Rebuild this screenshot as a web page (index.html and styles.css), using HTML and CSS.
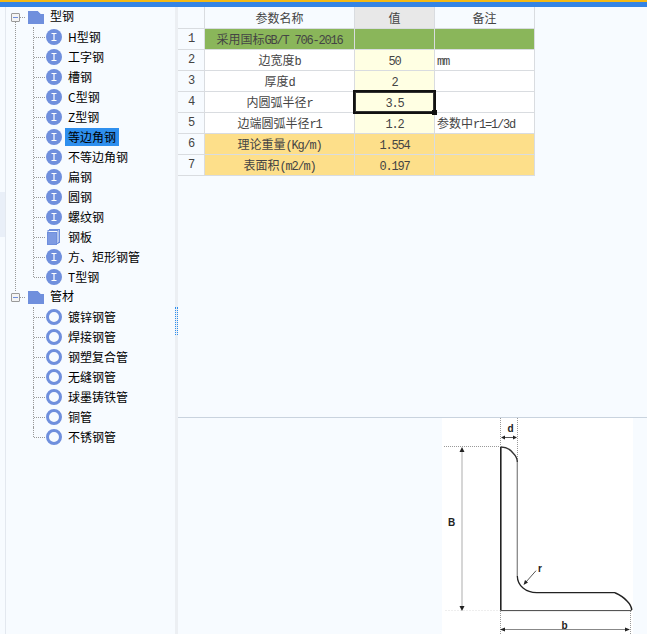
FILE: index.html
```html
<!DOCTYPE html>
<html lang="zh-CN">
<head>
  <meta charset="UTF-8" />
  <title>型钢参数</title>
  <link rel="stylesheet" href="styles.css">
</head>
<body>
  <svg width="0" height="0" class="defs">
    <defs>
      <g id="i-beam">
        <circle cx="8" cy="8" r="8" fill="#6f8fdd" />
        <path d="M5.5 4.5h5M5.5 11.5h5M8 4.5v7" stroke="#fff" stroke-width="1.2" fill="none" />
      </g>
      <g id="ring">
        <circle cx="8" cy="8" r="6.5" fill="none" stroke="#6f8fdd" stroke-width="3" />
      </g>
      <g id="plate">
        <rect x="3.5" y="0.5" width="10" height="13" fill="#f7fbff" stroke="#6f8fdd" />
        <rect x="2" y="1.5" width="10" height="13" fill="#f7fbff" stroke="#6f8fdd" />
        <rect x="1.5" y="3.5" width="9" height="12" fill="#7d9ae2" stroke="#6f8fdd" />
      </g>
      <g id="folder">
        <path d="M0 0h10l3 3h3v10H0z" fill="#6f8fdd" />
        <path d="M10 0h6v3h-3z" fill="#f7fbff" />
      </g>
    </defs>
  </svg>

  <div class="top-bar"></div>
  <div class="main">
    <div class="side-strip"><div class="side-mark"></div></div>

    <ul class="tree">
      <li class="root">
        <div class="node"><span class="expander"></span><svg class="folder" width="16" height="13"><use href="#folder" /></svg><span class="label">型钢</span></div>
        <ul class="children">
          <li class="leaf"><svg class="icon"><use href="#i-beam" /></svg><span class="label">H型钢</span></li>
          <li class="leaf"><svg class="icon"><use href="#i-beam" /></svg><span class="label">工字钢</span></li>
          <li class="leaf"><svg class="icon"><use href="#i-beam" /></svg><span class="label">槽钢</span></li>
          <li class="leaf"><svg class="icon"><use href="#i-beam" /></svg><span class="label">C型钢</span></li>
          <li class="leaf"><svg class="icon"><use href="#i-beam" /></svg><span class="label">Z型钢</span></li>
          <li class="leaf"><svg class="icon"><use href="#i-beam" /></svg><span class="label selected">等边角钢</span></li>
          <li class="leaf"><svg class="icon"><use href="#i-beam" /></svg><span class="label">不等边角钢</span></li>
          <li class="leaf"><svg class="icon"><use href="#i-beam" /></svg><span class="label">扁钢</span></li>
          <li class="leaf"><svg class="icon"><use href="#i-beam" /></svg><span class="label">圆钢</span></li>
          <li class="leaf"><svg class="icon"><use href="#i-beam" /></svg><span class="label">螺纹钢</span></li>
          <li class="leaf"><svg class="icon"><use href="#plate" /></svg><span class="label">钢板</span></li>
          <li class="leaf"><svg class="icon"><use href="#i-beam" /></svg><span class="label">方、矩形钢管</span></li>
          <li class="leaf"><svg class="icon"><use href="#i-beam" /></svg><span class="label">T型钢</span></li>
        </ul>
      </li>
      <li class="root">
        <div class="node"><span class="expander"></span><svg class="folder" width="16" height="13"><use href="#folder" /></svg><span class="label">管材</span></div>
        <ul class="children">
          <li class="leaf"><svg class="icon"><use href="#ring" /></svg><span class="label">镀锌钢管</span></li>
          <li class="leaf"><svg class="icon"><use href="#ring" /></svg><span class="label">焊接钢管</span></li>
          <li class="leaf"><svg class="icon"><use href="#ring" /></svg><span class="label">钢塑复合管</span></li>
          <li class="leaf"><svg class="icon"><use href="#ring" /></svg><span class="label">无缝钢管</span></li>
          <li class="leaf"><svg class="icon"><use href="#ring" /></svg><span class="label">球墨铸铁管</span></li>
          <li class="leaf"><svg class="icon"><use href="#ring" /></svg><span class="label">铜管</span></li>
          <li class="leaf"><svg class="icon"><use href="#ring" /></svg><span class="label">不锈钢管</span></li>
        </ul>
      </li>
    </ul>

    <div class="splitter"><div class="grip"></div></div>

    <div class="right">
      <div class="table-pane">
        <table class="params">
          <colgroup>
            <col class="col-no"><col class="col-name"><col class="col-val"><col class="col-note">
          </colgroup>
          <tr class="head">
            <th class="no"></th><th>参数名称</th><th class="val-head">值</th><th>备注</th>
          </tr>
          <tr class="green">
            <td class="no">1</td><td>采用国标<span class="en">GB/T 706-2016</span></td><td></td><td></td>
          </tr>
          <tr class="input">
            <td class="no">2</td><td>边宽度<span class="en">b</span></td><td class="val"><span class="en">50</span></td><td class="note"><span class="en">mm</span></td>
          </tr>
          <tr class="input">
            <td class="no">3</td><td>厚度<span class="en">d</span></td><td class="val"><span class="en">2</span></td><td class="note"></td>
          </tr>
          <tr class="input">
            <td class="no">4</td><td>内圆弧半径<span class="en">r</span></td><td class="val active"><span class="en">3.5</span></td><td class="note"></td>
          </tr>
          <tr class="input">
            <td class="no">5</td><td>边端圆弧半径<span class="en">r1</span></td><td class="val"><span class="en">1.2</span></td><td class="note">参数中<span class="en">r1=1/3d</span></td>
          </tr>
          <tr class="calc">
            <td class="no">6</td><td>理论重量<span class="en">(Kg/m)</span></td><td><span class="en">1.554</span></td><td></td>
          </tr>
          <tr class="calc">
            <td class="no">7</td><td>表面积<span class="en">(m2/m)</span></td><td><span class="en">0.197</span></td><td></td>
          </tr>
        </table>
      </div>

      <div class="draw-pane">
        <svg class="drawing" width="191" height="216" viewBox="0 0 191 216">
          <rect width="191" height="216" fill="#fff" />
          <g stroke="#999" stroke-width="1" stroke-dasharray="1 1" fill="none">
            <path d="M2 28.5H58" />
            <path d="M58.5 0V28" />
            <path d="M75.5 0V42" />
            <path d="M58.5 193V216" />
            <path d="M188.5 193V216" />
          </g>
          <path d="M3 192.5H58" stroke="#eee" stroke-dasharray="2 1" />
          <path d="M20 33V188" stroke="#bbb" stroke-width="1.2" />
          <path d="M20 29l-2.5 5h5zM20 193l-2.5-5h5z" fill="#222" />
          <path d="M61 19.5H73" stroke="#555" />
          <path d="M59 19.5l4-2v4zM75 19.5l-4-2v4z" fill="#222" />
          <path d="M60 211.5H186" stroke="#888" />
          <path d="M58 211.5l5-2v4zM188 211.5l-5-2v4z" fill="#222" />
          <path d="M58.8 28.8V192.6" stroke="#222" stroke-width="1.6" fill="none" />
          <path d="M58.8 29C65 29 68 31 71 35C74 38 75.3 40 75.3 44" stroke="#333" stroke-width="1.4" fill="none" />
          <path d="M75.3 44V158" stroke="#888" stroke-width="1.3" fill="none" />
          <path d="M75.3 158C75.5 168 84 174.7 94.7 174.7H173" stroke="#222" stroke-width="1.3" fill="none" />
          <path d="M173 174.7C178 177 182 179.5 185 183C188 186 189.5 189 189.7 192" stroke="#222" stroke-width="1.5" fill="none" />
          <path d="M58.8 192.6H189.7" stroke="#444" stroke-width="1" fill="none" />
          <path d="M94 152.7L84 164" stroke="#555" />
          <path d="M81.5 167l1.5-5 3 2.6z" fill="#222" />
          <text x="9.7" y="108" class="dim" text-anchor="middle">B</text>
          <text x="68.5" y="14" class="dim" text-anchor="middle">d</text>
          <text x="98" y="153.5" class="dim" text-anchor="middle">r</text>
          <text x="122.5" y="210.5" class="dim" text-anchor="middle">b</text>
        </svg>
      </div>
    </div>
  </div>
</body>
</html>
```

FILE: styles.css
```css
html, body {
  margin: 0;
  padding: 0;
  height: 100%;
  overflow: hidden;
}

body {
  background: #f7fbff;
  font-family: "Noto Sans CJK SC", "Liberation Sans", sans-serif;
  color: #000;
  display: flex;
  flex-direction: column;
}

.defs {
  position: absolute;
}

.top-bar {
  height: 5px;
  flex: none;
  background: #3584e4;
  border-top: 2px solid #f5b914;
}

.main {
  flex: 1;
  display: flex;
  min-height: 0;
}

/* left strip */
.side-strip {
  width: 5px;
  flex: none;
  background: #f7fbff;
  border-right: 1px solid #e3e8ef;
}

.side-mark {
  height: 45px;
  margin-top: 185px;
  background: #e9eff8;
}

/* tree */
.tree, .children {
  list-style: none;
  margin: 0;
  padding: 0;
}

.tree {
  width: 169px;
  flex: none;
  font-size: 12px;
}

.root {
  position: relative;
}

.root:first-child::before {
  content: "";
  position: absolute;
  left: 9px;
  top: 14px;
  height: 270px;
  border-left: 1px dotted #999;
}

.node {
  height: 20px;
  display: flex;
  align-items: center;
  position: relative;
}

.expander {
  width: 7px;
  height: 7px;
  margin-left: 5px;
  border: 1px solid #9a9a9a;
  border-radius: 1px;
  background: linear-gradient(#6f8fdd, #6f8fdd) center / 5px 1px no-repeat #f4f4f4;
  position: relative;
  z-index: 1;
}

.expander::after {
  content: "";
  position: absolute;
  left: 8px;
  top: 3px;
  width: 5px;
  border-top: 1px dotted #999;
}

.folder {
  margin-left: 8px;
  flex: none;
}

.node .label {
  margin-left: 6px;
  line-height: 16px;
  padding-bottom: 2px;
}

.leaf {
  height: 20px;
  display: flex;
  align-items: center;
  padding-left: 40px;
  position: relative;
}

.leaf::before {
  content: "";
  position: absolute;
  left: 27px;
  top: 0;
  height: 100%;
  border-left: 1px dotted #999;
}

.leaf:last-child::before {
  height: 10px;
}

.leaf::after {
  content: "";
  position: absolute;
  left: 28px;
  top: 10px;
  width: 11px;
  border-top: 1px dotted #999;
}

.icon {
  width: 16px;
  height: 16px;
  flex: none;
}

.leaf .label {
  margin-left: 6px;
  height: 18px;
  line-height: 17px;
  white-space: nowrap;
}

.leaf .selected {
  background: #2e8fee;
  padding: 0 3px;
  margin-left: 3px;
}

/* splitter */
.splitter {
  width: 3px;
  flex: none;
  background: #eceff3;
}

.grip {
  height: 28px;
  margin-top: 300px;
  border-left: 1px dotted #2e8fee;
  border-right: 1px dotted #2e8fee;
  width: 1px;
}

/* right side */
.right {
  flex: 1;
  display: flex;
  flex-direction: column;
  min-width: 0;
}

.table-pane {
  height: 410px;
  flex: none;
}

.params {
  border-collapse: separate;
  border-spacing: 0;
  table-layout: fixed;
  width: 357px;
  font-size: 12px;
  color: #444;
}

.col-no { width: 27px; }
.col-name { width: 150px; }
.col-val { width: 80px; }
.col-note { width: 100px; }

.params tr {
  height: 21px;
}

.params th, .params td {
  box-sizing: border-box;
  height: 21px;
  padding: 0;
  border-right: 1px solid #d9dce0;
  border-bottom: 1px solid #d9dce0;
  text-align: center;
  font-weight: normal;
  line-height: 16px;
  white-space: nowrap;
}

.params .head {
  height: 22px;
}

.params .head th {
  height: 22px;
  background: #f7fbff;
}

.params .head .val-head {
  background: #e8e8e8;
}

.params .no {
  background: #f7fbff;
  font-family: "Liberation Mono", monospace;
  letter-spacing: -1.2px;
}

.en {
  font-family: "Liberation Mono", monospace;
  font-size: 12px;
  line-height: 12px;
  letter-spacing: -1.2px;
}

.green td { background: #8ab65a; }
.input td { background: #fff; }
.input .val { background: #ffffe3; }
.calc td { background: #fddf8a; }

.params .note {
  text-align: left;
  padding-left: 2px;
}

.params .active {
  position: relative;
}

.active::before {
  content: "";
  position: absolute;
  left: -2px;
  top: -2px;
  right: -2px;
  bottom: -2px;
  border: 2px solid #111;
  box-shadow: 0 0 0 1px #333 inset;
}

.active::after {
  content: "";
  position: absolute;
  right: -3px;
  bottom: -3px;
  width: 5px;
  height: 5px;
  background: #111;
}

/* drawing */
.draw-pane {
  flex: 1;
  border-top: 1px solid #c9d3de;
  padding-left: 264px;
  min-height: 0;
}

.drawing {
  display: block;
}

.dim {
  font-family: "Liberation Sans", sans-serif;
  font-size: 10px;
  font-weight: bold;
  fill: #222;
}
```
